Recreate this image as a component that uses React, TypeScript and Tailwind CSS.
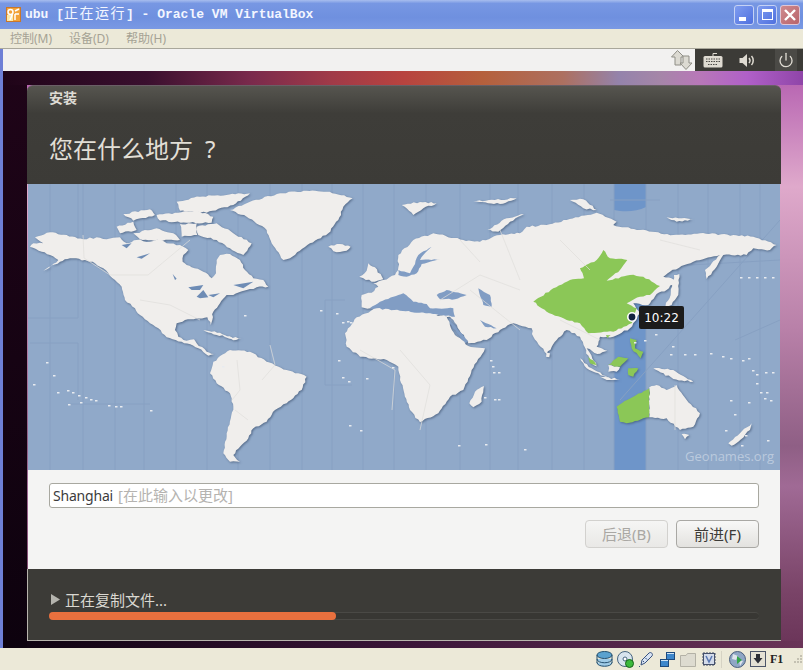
import { Power } from "lucide-react";

const CJK = "font-['Noto_Sans','Noto_Sans_CJK_SC',sans-serif]";

// 坐标取自 3 倍放大图：西半球 x = 页面 x * 3，东半球 x = (页面 x - 400) * 3
const westLand = [
  "M90,200 L100,190 L130,190 L105,172 L150,157 L200,165 L250,178 L290,172 L320,178 L360,172 L380,190 L410,180 L450,185 L480,178 L500,190 L540,195 L565,210 L550,225 L548,245 L575,262 L610,275 L635,295 L648,280 L650,240 L660,225 L690,222 L720,240 L735,270 L760,295 L790,300 L805,320 L770,322 L740,330 L700,345 L680,345 L660,370 L640,395 L632,435 L622,412 L590,415 L555,420 L530,430 L525,450 L535,470 L560,482 L582,478 L590,490 L620,515 L642,522 L625,527 L595,505 L545,485 L500,472 L475,445 L450,430 L420,405 L405,385 L375,360 L365,320 L345,300 L310,265 L285,250 L255,240 L210,235 L180,245 L130,272 L175,240 L150,225 L125,215 Z",
  "M640,545 L690,510 L750,515 L800,545 L860,570 L920,590 L905,630 L860,670 L825,690 L800,725 L760,745 L745,775 L720,800 L700,825 L720,845 L690,845 L670,820 L680,760 L700,680 L690,640 L650,610 L630,580 Z",
  "M690,90 L750,65 L840,40 L920,32 L980,35 L1058,55 L1030,80 L1015,120 L985,160 L930,190 L870,235 L850,240 L815,190 L800,150 L740,110 Z",
  "M985,200 L1020,192 L1052,200 L1040,212 L1010,217 Z",
  "M590,140 L650,130 L700,160 L755,190 L730,225 L690,205 L650,180 L595,165 Z",
  "M400,160 L470,145 L520,160 L540,180 L480,182 L420,178 Z",
  "M350,140 L400,125 L410,150 L360,160 Z",
  "M530,65 L600,50 L750,40 L700,75 L620,98 L540,92 Z",
  "M470,105 L590,92 L640,110 L635,128 L560,128 L480,122 Z",
  "M370,102 L450,88 L465,105 L400,122 Z",
  "M540,132 L590,130 L592,165 L545,170 Z",
  "M610,450 L660,458 L700,475 L650,465 Z",
  "M680,470 L725,475 L700,481 Z",
  "M1078,290 L1100,272 L1105,250 L1125,262 L1150,298 L1115,305 L1090,295 Z",
];

const westWater = [
  "M365,195 L395,190 L380,205 Z",
  "M410,232 L450,220 L425,236 Z",
  "M518,282 L530,296 L525,300 Z",
  "M565,322 L610,315 L600,330 L575,330 Z",
  "M590,350 L610,330 L625,352 L600,355 Z",
  "M625,345 L660,340 L640,352 Z",
  "M700,315 L760,305 L730,325 Z",
];

const eurasia =
  "M-115,345 L-85,338 L-65,320 L-80,310 L-50,300 L-15,285 L-5,262 L-5,225 L40,180 L100,160 L190,180 L240,185 L300,165 L360,160 L380,140 L440,135 L500,120 L590,98 L650,125 L640,135 L720,150 L820,165 L900,160 L1000,165 L1060,170 L1130,195 L1110,210 L1060,205 L1040,225 L970,225 L950,260 L920,297 L915,270 L935,250 L960,225 L880,245 L810,275 L790,290 L830,300 L800,330 L770,342 L745,375 L700,370 L720,400 L690,445 L640,470 L600,470 L590,500 L622,512 L592,522 L560,505 L595,565 L570,545 L540,470 L500,450 L470,480 L440,522 L400,470 L395,445 L340,430 L300,450 L260,480 L205,490 L160,420 L150,410 L100,405 L0,400 L-80,385 L-115,382 Z";

const africa =
  "M-165,460 L-130,412 L-70,385 L0,392 L60,398 L140,410 L165,465 L205,498 L255,505 L215,570 L190,630 L150,650 L115,700 L60,727 L30,690 L0,600 L-5,560 L-40,540 L-120,530 L-160,500 Z";

const eastIslands = [
  "M225,635 L252,618 L245,665 L220,682 L208,670 Z",
  "M440,518 L450,520 L448,532 L438,530 Z",
  "M748,622 L770,615 L800,630 L830,615 L860,660 L900,700 L880,740 L840,750 L800,715 L748,712 Z",
  "M845,762 L868,765 L855,778 Z",
  "M985,790 L1020,760 L1055,730 L1050,750 L1015,785 L995,797 Z",
  "M262,150 L320,115 L372,102 L330,125 L295,155 Z",
  "M510,60 L550,58 L590,90 L550,85 Z",
  "M5,75 L60,66 L110,70 L70,85 L40,105 Z",
  "M220,65 L350,55 L300,72 Z",
  "M800,112 L880,118 L830,125 Z",
  "M822,285 L838,282 L835,345 L815,375 L790,385 L812,345 Z",
  "M540,535 L575,565 L625,595 L595,580 L560,565 Z",
  "M760,565 L820,570 L880,605 L820,597 Z",
  "M600,590 L660,598 L620,600 Z",
  "M625,555 L660,562 L650,575 L625,575 Z",
];

const eastGreen = [
  "M400,365 L460,325 L510,300 L552,295 L540,265 L590,240 L610,210 L630,235 L682,240 L660,270 L620,302 L690,285 L730,290 L780,318 L750,345 L720,350 L680,370 L710,385 L695,430 L640,455 L565,460 L540,430 L500,420 L440,395 Z",
  "M650,680 L700,650 L748,625 L747,712 L680,730 L660,725 Z",
  "M690,475 L710,480 L705,505 L730,515 L722,535 L695,505 Z",
  "M625,555 L655,530 L685,535 L660,560 Z",
  "M565,530 L590,555 L570,550 Z",
  "M685,565 L715,565 L700,590 L685,585 Z",
  "M618,465 L632,465 L622,475 Z",
];

const eastWater = [
  "M-5,270 L30,280 L40,260 L55,225 L95,200 L70,225 L60,240 L120,238 L65,252 L50,280 L20,290 L-5,285 Z",
  "M110,345 L140,330 L200,345 L165,358 L120,358 Z",
  "M235,325 L270,345 L275,380 L250,375 Z",
  "M240,420 L290,445 L255,440 Z",
  "M150,420 L205,485 L195,490 L148,430 Z",
  "M-90,384 L-60,365 L-20,350 L10,340 L40,365 L80,372 L90,385 L160,385 L165,410 L100,402 L40,398 L-20,392 L-60,392 Z",
  "M125,590 L135,575 L150,565 L140,595 Z",
  "M600,290 L620,275 L625,285 L605,298 Z",
];

// 小岛
const dots = [
  [46, 362], [53, 375], [33, 384], [57, 392], [67, 390], [72, 392], [78, 395], [85, 397], [90, 399], [95, 400], [80, 402], [68, 404], [108, 405], [115, 406], [120, 406], [150, 410], [244, 315], [320, 310], [338, 360], [342, 322], [350, 322], [349, 425], [342, 377], [360, 430], [347, 321], [222, 366], [366, 378], [348, 381], [392, 367], [336, 313],
  [634, 342], [644, 340], [655, 334], [670, 354], [672, 346], [684, 354], [694, 354], [710, 353], [722, 356], [730, 358], [742, 360], [748, 358], [752, 370], [756, 374], [765, 372], [772, 372], [756, 383], [760, 392], [766, 392], [770, 400], [764, 398], [748, 402], [730, 400], [734, 414], [725, 430], [745, 435], [741, 445], [767, 440], [490, 360], [492, 366], [493, 372], [498, 399], [498, 372], [484, 397], [494, 399], [458, 445], [485, 444], [524, 449], [740, 277], [748, 277], [756, 277], [764, 277], [772, 277],
];

const tzLines = [50, 83, 115, 144, 176, 207, 238, 270, 302, 332, 363, 394, 426, 460, 490, 518, 552, 584, 614, 646, 678, 708, 740, 760];

// 把折线拆细并加一点抖动，海岸线才不会太直
function rough(d: string, amp = 5) {
  const pts = [...d.matchAll(/(-?\d+),(-?\d+)/g)].map((m) => [Number(m[1]), Number(m[2])]);
  const noise = (x: number, y: number) => {
    const v = Math.sin(x * 12.9898 + y * 78.233) * 43758.5453;
    return v - Math.floor(v) - 0.5;
  };
  let out = "";
  pts.forEach(([x, y], i) => {
    const [nx, ny] = pts[(i + 1) % pts.length];
    const len = Math.hypot(nx - x, ny - y);
    const n = Math.max(1, Math.round(len / 9));
    out += `${i === 0 ? "M" : "L"}${x},${y} `;
    for (let k = 1; k < n; k++) {
      const px = x + ((nx - x) * k) / n;
      const py = y + ((ny - y) * k) / n;
      const off = noise(px, py) * amp;
      out += `L${(px + (-(ny - y) / len) * off).toFixed(1)},${(py + ((nx - x) / len) * off).toFixed(1)} `;
    }
  });
  return out + "Z";
}

function WorldMap() {
  return (
    <svg viewBox="28 184 752 286" className="block h-[286px] w-[752px]">
      <rect x="28" y="184" width="752" height="286" fill="#90a9c9" />
      <path d="M614,184 L646,184 L646,207 C636,212 624,212 614,210 Z M614,280 H646 V470 H614 Z" fill="#6e95c9" />
      {tzLines.map((x) => (
        <line key={x} x1={x} y1="184" x2={x} y2="470" stroke="#87a0c2" strokeWidth="1" />
      ))}
      <g fill="none" stroke="#87a0c2">
        <path d="M28,318 H78 V184 M30,343 H78 V400 M70,404 H150 M235,410 H252 V435 M660,200 H610 M600,270 L780,260 M620,400 L780,220 M735,340 L780,320 M345,300 H325 V385 H352" />
      </g>
      <g className="[filter:drop-shadow(1px_1px_1px_rgba(50,70,100,0.6))]">
        <g transform="translate(0,180) scale(0.3333)" fill="#f0eeec">
          {westLand.map((d) => (
            <path key={d} d={rough(d)} />
          ))}
        </g>
        <g transform="translate(400,180) scale(0.3333)">
          <path d={rough(eurasia)} fill="#f0eeec" />
          {eastWater.map((d) => (
            <path key={d} d={rough(d, 3)} fill="#819dc4" />
          ))}
          <path d={rough(africa)} fill="#f0eeec" />
          {eastIslands.map((d) => (
            <path key={d} d={rough(d)} fill="#f0eeec" />
          ))}
          {eastGreen.map((d) => (
            <path key={d} d={rough(d, 4)} fill="#8bc757" />
          ))}
        </g>
      </g>
      <g transform="translate(0,180) scale(0.3333)" fill="#6e8cb5">
        {westWater.map((d) => (
          <path key={d} d={d} />
        ))}
      </g>
      {/* 国界 */}
      <g fill="none" stroke="#e0dedb" strokeWidth="0.7">
        <path d="M83,235 L84,258 M84,258 L110,275 L148,275 M148,275 L190,240 M140,300 L170,305 L200,320 M237,360 L240,390 L232,400 M262,380 L275,365 L270,345 M248,420 L235,410 M360,350 L395,370 L392,410 M400,350 L430,385 L420,430 M440,300 L480,275 L520,290 M500,230 L520,280 M560,240 L590,270 M470,290 L520,330 M460,240 L480,262 M560,320 L600,340 M675,385 V430 M700,250 L660,240" />
      </g>
      <g fill="#e8ebf0">
        {dots.map(([x, y]) => (
          <rect key={`${x}-${y}`} x={x} y={y} width="2.5" height="1.5" />
        ))}
      </g>
      <circle cx="632" cy="317" r="4.2" fill="#14233f" stroke="#ffffff" strokeWidth="1.6" />
    </svg>
  );
}

function TitleIcon() {
  return (
    <svg width="15" height="15" viewBox="0 0 15 15">
      <rect x="0.5" y="0.5" width="14" height="14" fill="#f2a33a" stroke="#c9772a" />
      <rect x="1" y="8" width="6" height="6" fill="#fbe9a8" />
      <circle cx="4.5" cy="5" r="2.5" fill="none" stroke="#fff" strokeWidth="1.5" />
      <path d="M6.5 7 L4 13 M9 4 L13 2 M9 7 L13 7 M9 7 L9 13" stroke="#fff" strokeWidth="1.5" />
    </svg>
  );
}

function WinButton({ kind }: { kind: "min" | "max" | "close" }) {
  const tone =
    kind === "close"
      ? "bg-[linear-gradient(135deg,#cf8a8e,#b9646b)] border-[#dfc7d6]"
      : "bg-[linear-gradient(135deg,#7f9df0,#4f70df)] border-[#c5d2f5]";
  return (
    <div className={`relative flex h-[20px] w-[20px] items-center justify-center rounded-[3px] border ${tone}`}>
      {kind === "min" && <div className="mt-[8px] mr-[3px] h-[4px] w-[7px] bg-white" />}
      {kind === "max" && <div className="h-[11px] w-[11px] border border-t-[3px] border-white" />}
      {kind === "close" && (
        <svg width="12" height="12" viewBox="0 0 12 12">
          <path d="M1 1 L11 11 M11 1 L1 11" stroke="#fff" strokeWidth="2.4" />
        </svg>
      )}
    </div>
  );
}

function ArrowsIcon() {
  return (
    <svg width="22" height="22" viewBox="0 0 22 22" fill="#dcdad2" stroke="#8f8e86">
      <path d="M6.5 1.5 L13 8 H10 V16 H4 V8 H0.5 Z" />
      <path d="M15 20.5 L21 14 H18 V7 H12 V14 H9 Z" />
    </svg>
  );
}

function KeyboardIcon() {
  return (
    <svg width="20" height="16" viewBox="0 0 20 16">
      <path d="M10 4 V1.5 H14" stroke="#dfdbd2" fill="none" />
      <rect x="0.5" y="4" width="19" height="11.5" rx="1.5" fill="#dfdbd2" />
      <path d="M3 7 H17 M3 9.5 H17 M5 12.5 H15" stroke="#4a4945" strokeWidth="1" strokeDasharray="1.5 1" />
    </svg>
  );
}

function SpeakerIcon() {
  return (
    <svg width="17" height="15" viewBox="0 0 17 15" fill="none">
      <path d="M0.5 5 H3.5 L8 1 V14 L3.5 10 H0.5 Z" fill="#dfdbd2" />
      <path d="M10 5 C11.2 6.5 11.2 8.5 10 10 M12.5 3 C14.8 5.5 14.8 9.5 12.5 12" stroke="#dfdbd2" strokeWidth="1.5" />
    </svg>
  );
}

// 底部状态栏图标
function StatusIcons() {
  return (
    <div className="flex items-center">
      <svg width="17" height="17" viewBox="0 0 17 17" className="ml-[1px]">
        <ellipse cx="8.5" cy="4" rx="7.5" ry="3.5" fill="#5aa2cf" stroke="#24506f" />
        <path d="M1 8 C1 13 16 13 16 8 M1 11.5 C1 16.5 16 16.5 16 11.5 M1 4 V12 M16 4 V12" stroke="#24506f" fill="#9fcbe6" />
      </svg>
      <svg width="17" height="17" viewBox="0 0 17 17" className="ml-[4px]">
        <circle cx="8" cy="8" r="7.5" fill="#d8e4ee" stroke="#47657f" />
        <circle cx="8" cy="8" r="2" fill="#fff" stroke="#47657f" />
        <circle cx="12.5" cy="12.5" r="4" fill="#3cb93c" stroke="#17621b" />
      </svg>
      <svg width="16" height="17" viewBox="0 0 16 17" className="ml-[4px]">
        <path d="M2 15 L1 16 M3 14 L4 9 L11 2 C13 0.5 15.5 3 14 5 L7 12 Z" fill="#d9e4f3" stroke="#38527f" />
        <path d="M5 10 L6 11 M7.5 7 L9 8.5" stroke="#38527f" />
      </svg>
      <svg width="17" height="17" viewBox="0 0 17 17" className="ml-[5px]">
        <rect x="7.5" y="1.5" width="8" height="7" fill="#3d87cc" stroke="#1d4a7d" />
        <rect x="1.5" y="8.5" width="8" height="7" fill="#3d87cc" stroke="#1d4a7d" />
        <path d="M8 2.5 H15 M2 9.5 H9" stroke="#cfe4f7" />
      </svg>
      <svg width="16" height="15" viewBox="0 0 16 15" className="ml-[4px]">
        <path d="M0.5 3.5 H6 L7.5 1.5 H15.5 V14.5 H0.5 Z" fill="#dddbd0" stroke="#b3b1a6" />
      </svg>
      <svg width="16" height="16" viewBox="0 0 16 16" className="ml-[5px]">
        <path d="M1 3 H15 M1 6 H15 M1 9 H15 M1 12 H15 M3 1 V15 M6 1 V15 M9 1 V15 M12 1 V15" stroke="#45506a" />
        <rect x="2.5" y="2.5" width="11" height="11" fill="#d3dbea" stroke="#45506a" />
        <path d="M5 5 L8 11 L11 5" fill="none" stroke="#5a78b2" strokeWidth="1.5" />
      </svg>
      <div className="ml-[4px] h-[17px] w-px bg-[#d6d3c4]" />
      <svg width="17" height="17" viewBox="0 0 17 17" className="ml-[7px]">
        <circle cx="8.5" cy="8.5" r="8" fill="#8fa6c5" stroke="#4b5e7c" />
        <path d="M4 3 L9 5 L7 9 L3 8 Z M10 9 L14 10 L11 15 Z" fill="#dfe5ec" />
        <path d="M8 5 L13 9 L8 13 Z" fill="#33a54a" />
      </svg>
      <svg width="16" height="16" viewBox="0 0 16 16" className="ml-[4px]">
        <rect x="0.5" y="0.5" width="15" height="15" fill="#e4e1d4" stroke="#4c5568" />
        <path d="M6 3 H10 V7 H12.5 L8 12.5 L3.5 7 H6 Z" fill="#2b2e35" />
      </svg>
      <span className="ml-[4px] w-[24px] font-['Liberation_Serif',serif] text-[12px] font-bold leading-none text-[#222]">F1</span>
      <svg width="8" height="8" viewBox="0 0 8 8" fill="#c4c1b2">
        <rect x="6" y="0" width="2" height="2" />
        <rect x="3" y="3" width="2" height="2" />
        <rect x="6" y="3" width="2" height="2" />
        <rect x="0" y="6" width="2" height="2" />
        <rect x="3" y="6" width="2" height="2" />
        <rect x="6" y="6" width="2" height="2" />
      </svg>
    </div>
  );
}

export default function App() {
  return (
    <div className="relative flex h-[670px] w-[803px] flex-col overflow-hidden bg-[#ece9d8]">
      {/* 标题栏 */}
      <div className="flex h-[29px] items-center bg-[linear-gradient(180deg,#a7bdee_0%,#7797e3_12%,#6f90df_60%,#7a99e4_100%)] pl-[6px] pr-[3px]">
        <TitleIcon />
        <div className="ml-[4px] whitespace-nowrap font-['Liberation_Mono','Noto_Sans_CJK_SC',monospace] text-[13px] font-bold text-[#f3f6ff]">
          ubu [<span className="text-[14px] font-normal tracking-[1.5px]">正在运行</span>] - Oracle VM VirtualBox
        </div>
        <div className="ml-auto flex gap-[3px]">
          <WinButton kind="min" />
          <WinButton kind="max" />
          <WinButton kind="close" />
        </div>
      </div>

      {/* 菜单 */}
      <div className={`flex h-[20px] items-center border-b border-[#a9a79b] bg-[#ece9d8] pl-[10px] text-[12px] text-[#a5a294] ${CJK}`}>
        <span className="w-[59px]">控制(M)</span>
        <span className="w-[57px]">设备(D)</span>
        <span>帮助(H)</span>
      </div>

      <div className="flex flex-1 border-l-[3px] border-[#6e7fd6]">
        <div className="flex w-[800px] flex-col">
          {/* 客户机顶栏 */}
          <div className="flex h-[22px]">
            <div className="flex flex-1 items-center justify-end bg-[#f2f1f0] pr-[2px]">
              <ArrowsIcon />
            </div>
            <div className="flex w-[108px] items-center bg-[#3c3b37] pl-[8px]">
              <KeyboardIcon />
              <div className="ml-[16px]">
                <SpeakerIcon />
              </div>
              <div className="ml-[19px] flex h-[22px] w-[22px] items-center justify-center bg-[#4b4a46] text-[#dfdbd2]">
                <Power size={16} strokeWidth={2} />
              </div>
            </div>
          </div>

          {/* 桌面壁纸 */}
          <div className="flex-1 pt-[14px] pb-[7px] pl-[24px] [background:linear-gradient(90deg,#1f0418_0%,#3a0f2e_18%,#7a2a4c_31%,#a03a48_41%,#b8433f_50%,#b5603c_60%,#ad7060_70%,#9483ab_77%,#a586a8_82%,#b878b8_87%,#b060c8_93%,#8f45a8_100%)_0_0/100%_14px_no-repeat,linear-gradient(180deg,#1f0418_0%,#0d020e_100%)_0_0/24px_100%_no-repeat,linear-gradient(90deg,#0d020e_0%,#3a1538_50%,#6a3458_100%)_0_570px/100%_7px_no-repeat,linear-gradient(180deg,#b45fb0_0%,#dfa9cb_20%,#b880a8_45%,#8f5f85_65%,#a06a95_72%,#7a4468_90%,#6a3458_100%)]">
            <div className={`flex h-[556px] w-[754px] flex-col ${CJK}`}>
              {/* 头部 */}
              <div className="h-[99px] rounded-t-[6px] border-t border-[#6a5f66] bg-[linear-gradient(180deg,#56554f_0%,#3e3d39_28%,#3c3b37_100%)] pl-[22px]">
                <div className="pt-[1px] text-[14px] font-bold leading-[22px] text-[#dedcd5]">安装</div>
                <div className="mt-[22px] whitespace-nowrap text-[24px] leading-[36px] text-[#e2dfd6]">
                  您在什么地方<span className="ml-[12px]">?</span>
                </div>
              </div>

              {/* 地图 */}
              <div className="relative ml-px h-[286px] w-[752px]">
                <WorldMap />
                <div className="absolute left-[611px] top-[122px] flex h-[23px] w-[45px] items-center justify-center rounded-[2px] bg-[#1c1c1c] font-['DejaVu_Sans',sans-serif] text-[12px] text-white">
                  10:22
                </div>
                <div className="absolute bottom-[4px] right-[6px] font-['Open_Sans',sans-serif] text-[13px] text-white/40">Geonames.org</div>
              </div>

              {/* 内容 */}
              <div className="ml-px h-[99px] w-[752px] bg-[#f4f4f3] pl-[21px] pt-[13px]">
                <div className="flex h-[25px] w-[710px] items-center rounded-[3px] border border-[#a8a8a0] bg-white pl-[3px] text-[15px] leading-none">
                  <span className="text-[14px] tracking-[-0.2px] text-[#3c3c3c]">Shanghai</span>
                  <span className="ml-[5px] text-[#b5b3b0]">[在此输入以更改]</span>
                </div>
                <div className="mt-[12px] flex w-[710px] justify-end gap-[8px] text-[15px]">
                  <div className="flex h-[28px] w-[83px] items-center justify-center rounded-[4px] border border-[#d2d1ce] bg-[linear-gradient(180deg,#f5f5f4,#e9e8e6)] text-[#a9a7a3]">后退(B)</div>
                  <div className="flex h-[28px] w-[83px] items-center justify-center rounded-[4px] border border-[#a9a8a4] bg-[linear-gradient(180deg,#f8f8f7,#e3e2df)] text-[#3c3b37]">前进(F)</div>
                </div>
              </div>

              {/* 进度 */}
              <div className="h-[72px] border-b border-l border-[#b8b5ad] bg-[#3c3b37] pl-[21px]">
                <div className="flex h-[43px] items-end pb-[2px]">
                  <svg width="10" height="11" viewBox="0 0 10 11" className="mb-[5px] ml-[2px]">
                    <path d="M0 0 L9 5.5 L0 11 Z" fill="#b5b4ae" />
                  </svg>
                  <span className="ml-[4px] text-[15px] leading-[20px] text-[#dad8d1]">正在复制文件...</span>
                </div>
                <div className="mt-[0px] h-[8px] w-[710px] rounded-full border-y border-[#4a4945] bg-[#383733]">
                  <div className="-mt-px h-[8px] w-[287px] rounded-full bg-[#e9703e]" />
                </div>
              </div>
            </div>
          </div>
        </div>
      </div>

      {/* 状态栏 */}
      <div className="flex h-[22px] items-center justify-end bg-[#ece9d8] pr-[1px]">
        <StatusIcons />
      </div>
    </div>
  );
}
